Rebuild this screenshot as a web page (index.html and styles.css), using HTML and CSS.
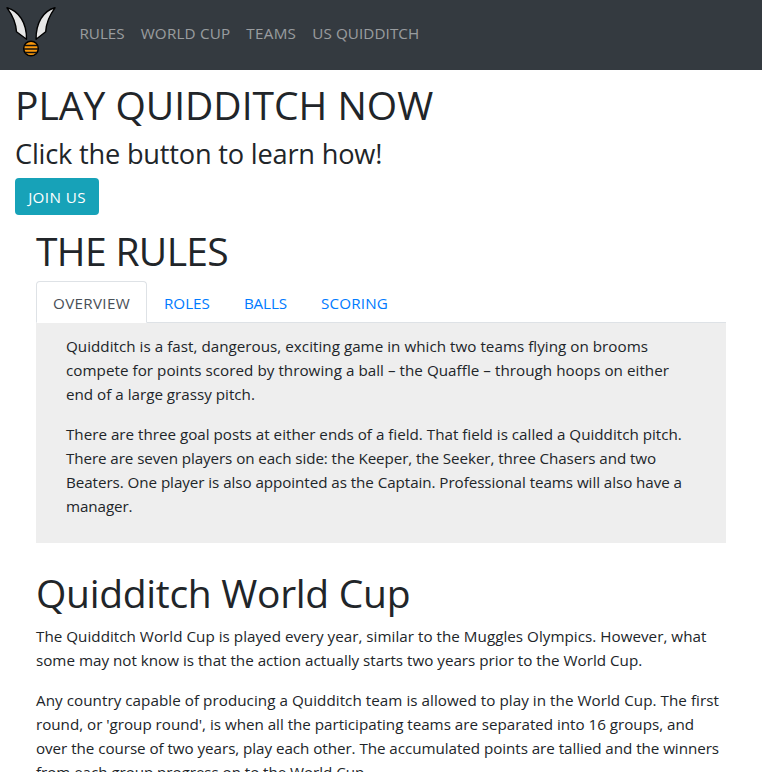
FILE: index.html
```html
<!DOCTYPE html>
<html lang="en">
<head>
<meta charset="utf-8">
<title>Quidditch</title>
<link rel="stylesheet" href="styles.css">
</head>
<body>
<nav class="navbar">
  <a class="brand" href="#" aria-label="Home">
    <svg width="62" height="62" viewBox="0 0 62 62">
      <g fill="#e6e6e6" stroke="#000" stroke-width="1.4" stroke-linejoin="round">
        <path d="M7 7.800C19 11 26.800 23 26.500 39.300L16.500 31.800C16 22 12 14.500 7 7.800Z"/>
        <path d="M55 7.800C43 11 35.800 23 36.100 39.300L45.700 31.800C46.200 22 50 14.500 55 7.800Z"/>
      </g>
      <circle cx="31" cy="48.500" r="7.300" fill="#f9980c" stroke="#000" stroke-width="1.500"/>
      <path d="M24.500 45.500H37.500M23.700 49H38.300M25 52.500H37" stroke="#111" stroke-width="1.300"/>
    </svg>
  </a>
  <a class="nav-link" href="#rules">RULES</a>
  <a class="nav-link wide" href="#cup">WORLD CUP</a>
  <a class="nav-link wider" href="#teams">TEAMS</a>
  <a class="nav-link mid" href="#us">US QUIDDITCH</a>
</nav>
<header class="hero">
  <h1>PLAY QUIDDITCH NOW</h1>
  <h3>Click the button to learn how!</h3>
  <a class="btn" href="#join">JOIN US</a>
</header>
<main>
  <section id="rules">
    <h1 class="tight">THE RULES</h1>
    <div class="tabs">
      <a class="tab active" href="#overview">OVERVIEW</a>
      <a class="tab roles" href="#roles">ROLES</a>
      <a class="tab balls" href="#balls">BALLS</a>
      <a class="tab scoring" href="#scoring">SCORING</a>
    </div>
    <div class="panel">
      <p>
        <span class="line s3">Quidditch is a fast, dangerous, exciting game in which two teams flying on brooms</span>
        <span class="line s4">compete for points scored by throwing a ball – the Quaffle – through hoops on either</span>
        <span class="line">end of a large grassy pitch.</span>
      </p>
      <p>
        <span class="line">There are three goal posts at either ends of a field. That field is called a Quidditch pitch.</span>
        <span class="line n9">There are seven players on each side: the Keeper, the Seeker, three Chasers and two</span>
        <span class="line n6">Beaters. One player is also appointed as the Captain. Professional teams will also have a</span>
        <span class="line n9">manager.</span>
      </p>
    </div>
  </section>
  <section id="cup" class="cup">
    <h1 class="snug">Quidditch World Cup</h1>
    <p>
      <span class="line s3">The Quidditch World Cup is played every year, similar to the Muggles Olympics. However, what</span>
      <span class="line">some may not know is that the action actually starts two years prior to the World Cup.</span>
    </p>
    <p>
      <span class="line s5">Any country capable of producing a Quidditch team is allowed to play in the World Cup. The first</span>
      <span class="line n2">round, or 'group round', is when all the participating teams are separated into 16 groups, and</span>
      <span class="line n5">over the course of two years, play each other. The accumulated points are tallied and the winners</span>
      <span class="line n6">from each group progress on to the World Cup.</span>
    </p>
  </section>
</main>
</body>
</html>
```
FILE: styles.css
```css
* { box-sizing: border-box; }
html { overflow: hidden; }
body {
  margin: 0;
  height: 772px;
  overflow: hidden;
  background: #fff;
  color: #212529;
  font: 400 15.2px/24px "Open Sans", "Noto Sans", sans-serif;
}
a { text-decoration: none; }
h1, h3, p { margin: 0; font-weight: 400; }
h1 { height: 48px; padding-top: 1px; margin-bottom: 8px; font-size: 39px; line-height: 48px; }
h1.tight { letter-spacing: -0.65px; margin-bottom: 7px; }
h1.snug { letter-spacing: -0.3px; }
h3 { height: 34px; padding-top: 1px; margin-bottom: 8px; font-size: 27.2px; line-height: 34px; letter-spacing: -0.2px; }
p { margin-bottom: 16px; }
.navbar { display: flex; align-items: flex-start; height: 70px; background: #343a40; }
.brand { width: 62px; height: 62px; margin-right: 9.500px; }
.brand svg { display: block; }
.nav-link { padding: 21px 8px; color: rgba(255, 255, 255, .5); white-space: nowrap; }
.wide { letter-spacing: .2px; }
.wider { letter-spacing: .3px; }
.mid { letter-spacing: .1px; }
.hero { padding: 10px 15px 11px; }
.btn {
  display: block;
  width: 84px;
  height: 37px;
  padding: 7px 0;
  border-radius: 4px;
  background: #17a2b8;
  color: #fff;
  text-align: center;
  letter-spacing: .4px;
}
main { padding: 0 36px; }
.tabs { display: flex; height: 42px; border-bottom: 1px solid #dee2e6; }
.tab { height: 42px; padding: 10px 17px; color: #007bff; }
.active {
  padding: 9px 16px;
  border: 1px solid #dee2e6;
  border-bottom-color: #fff;
  border-radius: 4px 4px 0 0;
  background: #fff;
  color: #495057;
  letter-spacing: .32px;
}
.balls { letter-spacing: -.1px; }
.scoring { letter-spacing: .17px; }
.panel { height: 220px; padding: 11px 30px; background: #eee; }
.line { display: block; white-space: nowrap; }
.s3 { letter-spacing: .028px; }
.s4 { letter-spacing: .04px; }
.s5 { letter-spacing: .051px; }
.n2 { letter-spacing: -.018px; }
.n5 { letter-spacing: -.05px; }
.n6 { letter-spacing: -.062px; }
.n9 { letter-spacing: -.088px; }
.cup { padding-top: 25px; }
```
